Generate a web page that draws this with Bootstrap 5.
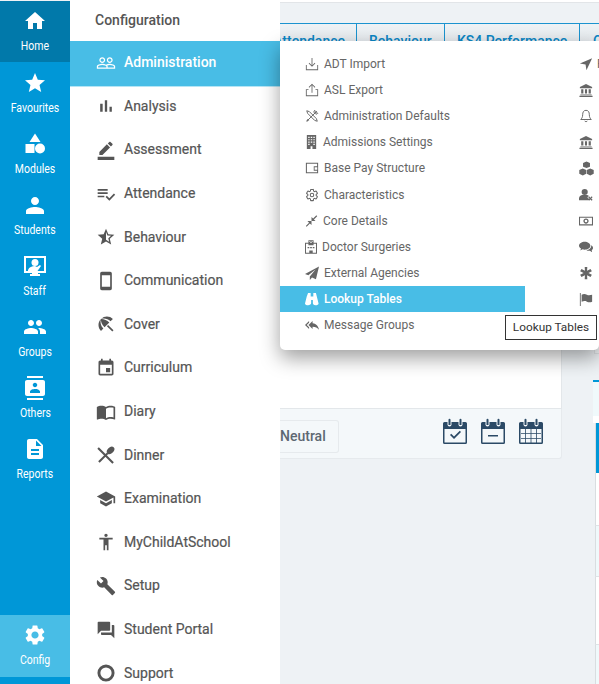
<!DOCTYPE html>
<html lang="en">
<head>
  <meta charset="UTF-8">
  <title>Configuration menu</title>
  <meta name="viewport" content="width=device-width, initial-scale=1">
  <link href="https://cdn.jsdelivr.net/npm/bootstrap@5.3.0/dist/css/bootstrap.min.css" rel="stylesheet">
  <style>
    html, body { height: 684px; overflow: hidden; }
    body { background: #eef2f5; font-family: Roboto, "Liberation Sans", sans-serif; }
    svg { fill: currentColor; flex: none; display: block; }

    /* left rail */
    .rail { width: 70px; flex: none; height: 684px; background: #0097d7; padding-bottom: 7px; }
    .rail-item { height: 61px; flex: none; padding-top: 9px; color: #fff; text-decoration: none; }
    .rail-item span { font-size: 12.5px; line-height: 16px; margin-top: 5px; white-space: nowrap; transform: scaleX(.84); }
    .rail-home { height: 62px; background: #0179aa; border-top: 1px solid #eef2f5; padding-top: 8px; }
    .rail-config { height: 62px; background: #48bde6; padding-top: 8px; }

    /* second level */
    .side-panel { width: 210px; flex: none; height: 684px; background: #fff; overflow: hidden; }
    .side-title { height: 41px; flex: none; padding-left: 25px; font-size: 14px; font-weight: 500; color: #555; }
    .side-item { height: 43.6px; flex: none; padding-left: 26px; gap: 8px; font-size: 14px; color: #555; -webkit-text-stroke: .2px #555; }
    .side-item.on { color: #fff; font-weight: 500; -webkit-text-stroke: 0; background: #48bde6; box-shadow: 0 1.4px 0 #48bde6; }

    /* page behind the menus */
    .behind { flex: 1; min-width: 0; height: 684px; overflow: hidden; }
    .top-strip { height: 23px; flex: none; background: linear-gradient(#fff 2px, #e2e5e8 2px, #e2e5e8 3px, #eef2f5 3px); }
    .tab-row { height: 33px; flex: none; border-top: 1px solid #1b93cf; background: linear-gradient(#eef2f5, #dfe4e8); }
    .tab-cell { height: 32px; flex: none; padding-top: 7px; border-right: 1px solid #1b93cf; color: #0a86c5; font-size: 14px; font-weight: 500; white-space: nowrap; }
    .tab-a { width: 77px; padding-right: 11px; }
    .tab-b { width: 88px; padding-left: 12px; }
    .tab-c { width: 135px; padding-left: 12px; }
    .tab-d { padding-left: 13px; border-right: 0; }
    .work-card { width: 282px; height: 403px; flex: none; }
    .card-top { height: 353px; flex: none; background: #fff; border-right: 1px solid #e3e7ea; border-bottom: 1px solid #e3e7ea; }
    .card-foot { height: 50px; flex: none; background: #f4f8fa; border-right: 1px solid #e6eaed; border-bottom: 1px solid #e6eaed; border-bottom-right-radius: 3px; padding-right: 18px; }
    .btn-neutral { width: 60px; height: 33px; margin-top: 5px; margin-left: -1px; margin-right: auto; border: 1px solid #e6eaed; border-left: 0; border-radius: 0 3px 3px 0; font-size: 14px; font-weight: 500; color: #5d6872; padding-left: 1px; }
    .cal-icons { gap: 14px; margin-bottom: 4px; color: #2b4a66; }
    .right-strip { width: 6px; margin-left: 31px; flex: none; }
    .strip-stub { height: 298px; flex: none; margin-left: 1px; background: #f2f5f7; border-left: 1px solid #dfe3e6; border-bottom: 1px solid #dfe3e6; }
    .strip-gap { height: 26px; flex: none; }
    .strip-head { height: 36px; flex: none; background: #f0f9fb; border-top: 2px solid #0097d7; }
    .strip-line { height: 7px; flex: none; background: #fff; }
    .strip-row { flex: none; margin-left: 2px; border-left: 1px solid #d9dde0; border-bottom: 1px solid #dfe3e6; }
    .strip-r1 { height: 50px; background: #0097d7; border-bottom: 0; }
    .strip-r2 { height: 53px; background: #fff; }
    .strip-r3 { height: 51px; background: #f0f9fb; }
    .strip-r4 { height: 68px; background: #fff; }
    .strip-r5 { height: 40px; background: #f0f9fb; border-bottom: 0; }

    /* flyout */
    .flyout { left: 280px; top: 41px; width: 319px; height: 309px; padding-top: 10px; background: #fff; border-radius: 0 0 5px 5px; box-shadow: 0 8px 20px rgba(0,0,0,.38); z-index: 5; overflow: hidden; }
    .fly-col-a { width: 245px; flex: none; }
    .fly-col-b { flex: 1; min-width: 0; }
    .fly-item { height: 26.1px; padding-left: 25px; gap: 5px; font-size: 12px; color: #666; white-space: nowrap; }
    .fly-item.on { color: #fff; font-weight: 500; background: #48bde6; }
    .fly-col-b .fly-item { padding-left: 54px; gap: 4px; }
    .tip-box { left: 225px; top: 274px; width: 92px; height: 25px; background: #fff; border: 1px solid #333; font-size: 11.8px; color: #333; }
  </style>
</head>
<body class="d-flex position-relative">

  <!-- main rail -->
  <nav class="rail d-flex flex-column">
    <a class="rail-item rail-home d-flex flex-column align-items-center"><svg width="24" height="24" viewBox="0 0 24 24"><path d="M10 20v-6h4v6h5v-8h3L12 3 2 12h3v8z"/></svg><span>Home</span></a>
    <a class="rail-item d-flex flex-column align-items-center"><svg width="24" height="24" viewBox="0 0 24 24"><path d="M12 17.27L18.18 21l-1.64-7.03L22 9.24l-7.19-.61L12 2 9.19 8.63 2 9.24l5.46 4.73L5.82 21z"/></svg><span>Favourites</span></a>
    <a class="rail-item d-flex flex-column align-items-center"><svg width="24" height="24" viewBox="0 0 24 24"><path d="M12 1.500l5.500 8.500H6.500z"/><rect x="2.500" y="12" width="9" height="9"/><circle cx="17" cy="16.500" r="5"/></svg><span>Modules</span></a>
    <a class="rail-item d-flex flex-column align-items-center"><svg width="24" height="24" viewBox="0 0 24 24"><path d="M12 12c2.210 0 4-1.790 4-4s-1.790-4-4-4-4 1.790-4 4 1.790 4 4 4zm0 2c-2.670 0-9 1.340-9 4v3h18v-3c0-2.660-6.330-4-9-4z"/></svg><span>Students</span></a>
    <a class="rail-item d-flex flex-column align-items-center"><svg width="24" height="24" viewBox="0 0 24 24"><path fill-rule="evenodd" d="M1 2h22v17H15v1h2v2H7v-2h2v-1H1zm2 2v13h18V4z"/><circle cx="12" cy="8.500" r="3.500"/><path d="M5 16c1-3 4-4 7-4l2 1 3-2 1 1-3.500 5H5z"/></svg><span>Staff</span></a>
    <a class="rail-item d-flex flex-column align-items-center"><svg width="24" height="24" viewBox="0 0 24 24"><path d="M16 11c1.660 0 2.990-1.340 2.990-3S17.660 5 16 5c-1.660 0-3 1.340-3 3s1.340 3 3 3zm-8 0c1.660 0 2.990-1.340 2.990-3S9.660 5 8 5C6.340 5 5 6.340 5 8s1.340 3 3 3zm0 2c-2.330 0-7 1.170-7 3.500V19h14v-2.500c0-2.330-4.670-3.500-7-3.500zm8 0c-.29 0-.62.02-.97.05 1.160.84 1.970 1.970 1.970 3.450V19h6v-2.500c0-2.330-4.670-3.500-7-3.500z"/></svg><span>Groups</span></a>
    <a class="rail-item d-flex flex-column align-items-center"><svg width="24" height="24" viewBox="2 0 20 24"><path d="M20 0H4v2h16V0zM4 24h16v-2H4v2zM20 4H4c-1.100 0-2 .9-2 2v12c0 1.100.9 2 2 2h16c1.100 0 2-.9 2-2V6c0-1.100-.9-2-2-2zm-8 2.750c1.240 0 2.250 1.010 2.250 2.250s-1.010 2.250-2.250 2.250S9.750 10.240 9.750 9 10.760 6.750 12 6.750zM17 17H7v-1.500c0-1.670 3.330-2.500 5-2.500s5 .83 5 2.500V17z"/></svg><span>Others</span></a>
    <a class="rail-item d-flex flex-column align-items-center"><svg width="24" height="24" viewBox="0 0 24 24"><path d="M14 2H6c-1.100 0-1.990.9-1.990 2L4 20c0 1.100.89 2 1.990 2H18c1.100 0 2-.9 2-2V8l-6-6zm2 16H8v-2h8v2zm0-4H8v-2h8v2zm-3-5V3.500L18.500 9H13z"/></svg><span>Reports</span></a>
    <a class="rail-item rail-config mt-auto d-flex flex-column align-items-center"><svg width="24" height="24" viewBox="0 0 24 24"><path d="M19.140 12.940c.04-.3.06-.61.06-.94 0-.32-.02-.64-.07-.94l2.030-1.580a.49.49 0 0 0 .12-.61l-1.920-3.320a.488.488 0 0 0-.59-.22l-2.390.96c-.5-.38-1.030-.7-1.620-.94l-.36-2.540a.484.484 0 0 0-.48-.41h-3.840c-.24 0-.43.17-.47.41l-.36 2.540c-.59.24-1.130.57-1.620.94l-2.390-.96c-.22-.08-.47 0-.59.22L2.740 8.870c-.12.21-.08.47.12.61l2.030 1.580c-.05.3-.09.63-.09.94s.02.64.07.94l-2.030 1.580a.49.49 0 0 0-.12.61l1.920 3.320c.12.22.37.29.59.22l2.390-.96c.5.38 1.030.7 1.620.94l.36 2.540c.05.24.24.41.48.41h3.840c.24 0 .44-.17.47-.41l.36-2.540c.59-.24 1.130-.56 1.620-.94l2.390.96c.22.08.47 0 .59-.22l1.920-3.320c.12-.22.07-.47-.12-.61l-2.010-1.580zM12 15.600c-1.980 0-3.600-1.620-3.600-3.600s1.620-3.600 3.600-3.600 3.600 1.620 3.600 3.600-1.620 3.600-3.600 3.600z"/></svg><span>Config</span></a>
  </nav>

  <!-- configuration list -->
  <aside class="side-panel d-flex flex-column">
    <div class="side-title d-flex align-items-center">Configuration</div>
    <div class="side-item on d-flex align-items-center"><svg width="20" height="20" viewBox="0 0 24 24"><path d="M16.500 13c-1.200 0-3.070.34-4.500 1-1.430-.67-3.300-1-4.500-1C5.330 13 1 14.080 1 16.250V19h22v-2.750c0-2.170-4.330-3.250-6.500-3.250zm-4 4.500h-10v-1.250c0-.54 2.560-1.750 5-1.750s5 1.210 5 1.750v1.250zm9 0H14v-1.250c0-.46-.2-.86-.52-1.220.88-.3 1.960-.53 3.020-.53 2.440 0 5 1.210 5 1.750v1.250zM7.500 12c1.930 0 3.500-1.570 3.500-3.500S9.430 5 7.500 5 4 6.570 4 8.500 5.570 12 7.500 12zm0-5.500c1.100 0 2 .9 2 2s-.9 2-2 2-2-.9-2-2 .9-2 2-2zm9 5.500c1.930 0 3.500-1.570 3.500-3.500S18.430 5 16.500 5 13 6.570 13 8.500s1.570 3.500 3.500 3.500zm0-5.500c1.100 0 2 .9 2 2s-.9 2-2 2-2-.9-2-2 .9-2 2-2z"/></svg>Administration</div>
    <div class="side-item d-flex align-items-center"><svg width="20" height="20" viewBox="0 0 24 24"><path d="M5 9.200h3V19H5zM10.600 5h2.800v14h-2.800zm5.600 8H19v6h-2.800z"/></svg>Analysis</div>
    <div class="side-item d-flex align-items-center"><svg width="20" height="20" viewBox="0 0 24 24"><path d="M22 24H2v-4h20v4zM13.060 5.190l3.750 3.750L7.750 18H4v-3.750l9.060-9.060zm4.820 2.680-3.750-3.750 1.830-1.830c.39-.39 1.020-.39 1.410 0l2.340 2.340c.39.39.39 1.020 0 1.410l-1.830 1.830z"/></svg>Assessment</div>
    <div class="side-item d-flex align-items-center"><svg width="20" height="20" viewBox="0 0 24 24"><path d="M14 10H2v2h12v-2zm0-4H2v2h12V6zM2 16h8v-2H2v2zm19.500-4.500L23 13l-6.990 7-4.510-4.500L13 14l3.010 3 5.490-5.500z"/></svg>Attendance</div>
    <div class="side-item d-flex align-items-center"><svg width="20" height="20" viewBox="0 0 24 24"><path d="M22 9.240l-7.190-.62L12 2 9.190 8.630 2 9.240l5.460 4.730L5.820 21 12 17.270 18.180 21l-1.630-7.030L22 9.240zM12 15.400V6.100l1.710 4.040 4.380.38-3.320 2.880 1 4.280L12 15.400z"/></svg>Behaviour</div>
    <div class="side-item d-flex align-items-center"><svg width="20" height="20" viewBox="0 0 24 24"><path d="M17 1.010L7 1c-1.100 0-2 .9-2 2v18c0 1.100.9 2 2 2h10c1.100 0 2-.9 2-2V3c0-1.100-.9-1.990-2-1.990zM17 19H7V5h10v14z"/></svg>Communication</div>
    <div class="side-item d-flex align-items-center"><svg width="20" height="20" viewBox="0 0 24 24"><path d="M13.127 14.560l1.430-1.430 6.440 6.443L19.570 21zm4.293-5.730l2.860-2.860c-3.950-3.950-10.350-3.960-14.300-.02 3.930-1.300 8.310-.25 11.440 2.880zM5.950 5.980c-3.940 3.950-3.930 10.350.02 14.300l2.860-2.860C5.700 14.290 4.650 9.910 5.950 5.980zm.02-.02l-.01.01c-.38 3.010 1.170 6.880 4.300 10.020l5.730-5.730c-3.130-3.130-7.010-4.680-10.020-4.300z"/></svg>Cover</div>
    <div class="side-item d-flex align-items-center"><svg width="20" height="20" viewBox="0 0 24 24"><path d="M17 12h-5v5h5v-5zM16 1v2H8V1H6v2H5c-1.110 0-1.990.9-1.990 2L3 19c0 1.100.89 2 2 2h14c1.100 0 2-.9 2-2V5c0-1.100-.9-2-2-2h-1V1h-2zm3 18H5V8h14v11z"/></svg>Curriculum</div>
    <div class="side-item d-flex align-items-center"><svg width="20" height="20" viewBox="0 0 24 24"><path d="M21 5c-1.110-.35-2.330-.5-3.500-.5-1.950 0-4.050.4-5.500 1.500-1.450-1.100-3.550-1.500-5.500-1.500S2.450 4.900 1 6v14.650c0 .25.25.5.5.5.1 0 .15-.05.25-.05C3.100 20.450 5.050 20 6.500 20c1.950 0 4.050.4 5.500 1.500 1.350-.85 3.800-1.500 5.500-1.500 1.650 0 3.350.3 4.750 1.050.1.05.15.05.25.05.25 0 .5-.25.5-.5V6c-.6-.45-1.250-.75-2-1zm0 13.500c-1.100-.35-2.300-.5-3.500-.5-1.700 0-4.150.65-5.500 1.500V8c1.350-.85 3.800-1.500 5.500-1.500 1.200 0 2.400.15 3.500.5v11.500z"/></svg>Diary</div>
    <div class="side-item d-flex align-items-center"><svg width="20" height="20" viewBox="0 0 24 24"><path d="M3.400 2.600l18 18-1.800 1.800-18-18zM15 10.500L4.400 21.200l-1.800-1.800L13.200 9z"/><ellipse cx="17.500" cy="6.500" rx="3.600" ry="5.200" transform="rotate(45 17.500 6.500)"/></svg>Dinner</div>
    <div class="side-item d-flex align-items-center"><svg width="20" height="20" viewBox="0 0 24 24"><path d="M5 13.180v4L12 21l7-3.820v-4L12 17l-7-3.820zM12 3L1 9l11 6 9-4.910V17h2V9L12 3z"/></svg>Examination</div>
    <div class="side-item d-flex align-items-center"><svg width="20" height="20" viewBox="0 0 24 24"><path d="M12 2c1.100 0 2 .9 2 2s-.9 2-2 2-2-.9-2-2 .9-2 2-2zm8 7h-5v13h-2v-6h-2v6H9V9H4V7h16v2z"/></svg>MyChildAtSchool</div>
    <div class="side-item d-flex align-items-center"><svg width="20" height="20" viewBox="0 0 24 24"><path d="M22.700 19l-9.100-9.100c.9-2.300.4-5-1.500-6.900-2-2-5-2.400-7.400-1.300L9 6 6 9 1.600 4.700C.4 7.100.9 10.100 2.900 12.100c1.900 1.900 4.600 2.400 6.900 1.500l9.100 9.100c.4.4 1 .4 1.400 0l2.300-2.300c.5-.4.5-1.100.1-1.400z"/></svg>Setup</div>
    <div class="side-item d-flex align-items-center"><svg width="20" height="20" viewBox="0 0 24 24"><path d="M21 6h-2v9H6v2c0 .55.45 1 1 1h11l4 4V7c0-.55-.45-1-1-1zm-4 6V3c0-.55-.45-1-1-1H3c-.55 0-1 .45-1 1v14l4-4h10c.55 0 1-.45 1-1z"/></svg>Student Portal</div>
    <div class="side-item d-flex align-items-center"><svg width="20" height="20" viewBox="0 0 24 24"><circle cx="12" cy="12" r="8.500" fill="none" stroke="currentColor" stroke-width="3.500"/></svg>Support</div>
  </aside>

  <!-- page content behind the menu -->
  <main class="behind d-flex flex-column">
    <div class="top-strip"></div>
    <div class="tab-row d-flex">
      <div class="tab-cell tab-a d-flex justify-content-end">Attendance</div>
      <div class="tab-cell tab-b">Behaviour</div>
      <div class="tab-cell tab-c">KS4 Performance</div>
      <div class="tab-cell tab-d">Curriculum</div>
    </div>
    <div class="d-flex flex-grow-1">
      <div class="work-card d-flex flex-column">
        <div class="card-top"></div>
        <div class="card-foot d-flex align-items-center">
          <div class="btn-neutral d-flex align-items-center">Neutral</div>
          <div class="cal-icons d-flex">
            <svg width="24" height="27" viewBox="0 0 24 27"><path fill-rule="evenodd" d="M1.500 4H22.500A1.500 1.500 0 0 1 24 5.500v19a1.500 1.500 0 0 1-1.500 1.500H1.500A1.500 1.500 0 0 1 0 24.500v-19A1.500 1.500 0 0 1 1.500 4zM1.500 11v13.500h21V11z"/><rect x="4.500" y="1" width="4" height="7.500" rx="2" fill="#f4f8fa"/><rect x="15.500" y="1" width="4" height="7.500" rx="2" fill="#f4f8fa"/><path d="M5.500 1.800a1 1 0 0 1 2 0V7h-2zM16.500 1.800a1 1 0 0 1 2 0V7h-2z"/><path d="M7 17l1.200-1.200 2.800 2.800 5.800-5.800L18 14l-7 7z"/></svg>
            <svg width="24" height="27" viewBox="0 0 24 27"><path fill-rule="evenodd" d="M1.500 4H22.500A1.500 1.500 0 0 1 24 5.500v19a1.500 1.500 0 0 1-1.500 1.500H1.500A1.500 1.500 0 0 1 0 24.500v-19A1.500 1.500 0 0 1 1.500 4zM1.500 11v13.500h21V11z"/><rect x="4.500" y="1" width="4" height="7.500" rx="2" fill="#f4f8fa"/><rect x="15.500" y="1" width="4" height="7.500" rx="2" fill="#f4f8fa"/><path d="M5.500 1.800a1 1 0 0 1 2 0V7h-2zM16.500 1.800a1 1 0 0 1 2 0V7h-2zM7 17h10v1.500H7z"/></svg>
            <svg width="24" height="27" viewBox="0 0 24 27"><path fill-rule="evenodd" d="M1.500 4H22.500A1.500 1.500 0 0 1 24 5.500v19a1.500 1.500 0 0 1-1.500 1.500H1.500A1.500 1.500 0 0 1 0 24.500v-19A1.500 1.500 0 0 1 1.500 4zM1.500 11v13.500h21V11z"/><rect x="4.500" y="1" width="4" height="7.500" rx="2" fill="#f4f8fa"/><rect x="15.500" y="1" width="4" height="7.500" rx="2" fill="#f4f8fa"/><path d="M5.500 1.800a1 1 0 0 1 2 0V7h-2zM16.500 1.800a1 1 0 0 1 2 0V7h-2zM2 15h20v.8H2zM2 20h20v.8H2zM6 11h.8v14H6zM11.600 11h.8v14h-.8zM17.200 11h.8v14h-.8z"/></svg>
          </div>
        </div>
      </div>
      <div class="right-strip d-flex flex-column">
        <div class="strip-stub"></div>
        <div class="strip-gap"></div>
        <div class="strip-head"></div>
        <div class="strip-line"></div>
        <div class="strip-row strip-r1"></div>
        <div class="strip-row strip-r2"></div>
        <div class="strip-row strip-r3"></div>
        <div class="strip-row strip-r4"></div>
        <div class="strip-row strip-r5"></div>
      </div>
    </div>
  </main>

  <!-- administration flyout -->
  <div class="flyout position-absolute d-flex">
    <div class="fly-col-a">
      <div class="fly-item d-flex align-items-center"><svg width="14" height="14" viewBox="0 0 16 16"><path d="M7.500 1h1v8.300l2.600-2.600.7.700L8 11.200 4.200 7.400l.7-.7 2.600 2.600zM1 9h1v5h12V9h1v6H1z"/></svg>ADT Import</div>
      <div class="fly-item d-flex align-items-center"><svg width="14" height="14" viewBox="0 0 16 16"><path d="M7.500 11h1V2.700l2.600 2.600.7-.7L8 .8 4.200 4.600l.7.700 2.600-2.600zM1 7h3v1H2v6h12V8h-2V7h3v8H1z"/></svg>ASL Export</div>
      <div class="fly-item d-flex align-items-center"><svg width="14" height="14" viewBox="0 0 16 16"><path fill="none" stroke="currentColor" stroke-width="1.100" d="M2 2l3 1 8 8 1 3-3-1-8-8zM13.500 2.500l-11 11M11 1.500l3.500 3.500-2 1-2.500-2.500zM2 14l2-1-1-1z"/></svg>Administration Defaults</div>
      <div class="fly-item d-flex align-items-center"><svg width="13" height="14" viewBox="0 0 13 15"><path fill-rule="evenodd" d="M1.500 0h10v15h-4v-3h-2v3h-4zM3 2v1.200h1.500V2zm2.700 0v1.200h1.600V2zm2.800 0v1.200H10V2zM3 4.500v1.200h1.500V4.500zm2.700 0v1.200h1.600V4.500zm2.800 0v1.200H10V4.500zM3 7v1.200h1.500V7zm2.700 0v1.200h1.600V7zm2.800 0v1.200H10V7zM3 9.500v1.200h1.500V9.500zm5.500 0v1.200H10V9.500z"/></svg>Admissions Settings</div>
      <div class="fly-item d-flex align-items-center"><svg width="14" height="14" viewBox="0 0 16 16"><path fill-rule="evenodd" d="M1 2h14v12H1zm1.200 1.200v9.600h11.600V11H10V6h3.800V3.200zM11 7v3h3V7z"/></svg>Base Pay Structure</div>
      <div class="fly-item d-flex align-items-center"><svg width="14" height="14" viewBox="0 0 24 24"><path fill="none" stroke="currentColor" stroke-width="1.800" d="M19.140 12.940c.04-.3.06-.61.06-.94 0-.32-.02-.64-.07-.94l2.030-1.580a.49.49 0 0 0 .12-.61l-1.920-3.320a.488.488 0 0 0-.59-.22l-2.390.96c-.5-.38-1.030-.7-1.620-.94l-.36-2.540a.484.484 0 0 0-.48-.41h-3.840c-.24 0-.43.17-.47.41l-.36 2.540c-.59.24-1.130.57-1.620.94l-2.390-.96c-.22-.08-.47 0-.59.22L2.740 8.870c-.12.21-.08.47.12.61l2.030 1.580c-.05.3-.09.63-.09.94s.02.64.07.94l-2.030 1.580a.49.49 0 0 0-.12.61l1.920 3.320c.12.22.37.29.59.22l2.390-.96c.5.38 1.030.7 1.620.94l.36 2.540c.05.24.24.41.48.41h3.840c.24 0 .44-.17.47-.41l.36-2.540c.59-.24 1.130-.56 1.620-.94l2.390.96c.22.08.47 0 .59-.22l1.920-3.320c.12-.22.07-.47-.12-.61l-2.010-1.580z"/><circle cx="12" cy="12" r="3" fill="none" stroke="currentColor" stroke-width="1.800"/></svg>Characteristics</div>
      <div class="fly-item d-flex align-items-center"><svg width="13" height="14" viewBox="0 0 16 16"><path d="M2 15l-1-1 4-4-2-2h5v5l-2-2zM15 2l-4 4 2 2H8V3l2 2 4-4z"/></svg>Core Details</div>
      <div class="fly-item d-flex align-items-center"><svg width="12" height="14" viewBox="0 0 14 16"><path fill-rule="evenodd" d="M4 0h6v3h4v13H0V3h4zm1 1v1h1v1h2V2h1V1H8v.8H6V1zM1.200 4.200v10.600H5V12h4v2.800h3.800V4.200H10V6H4V4.200zM3 8h2v1.500H3zm3 0h2v1.500H6zm3 0h2v1.500H9z"/></svg>Doctor Surgeries</div>
      <div class="fly-item d-flex align-items-center"><svg width="14" height="14" viewBox="0 0 16 16"><path d="M16 .5L12.500 15l-4.500-2-2.500 3v-4L12 4 3.800 10.500 0 9z"/></svg>External Agencies</div>
      <div class="fly-item on d-flex align-items-center"><svg width="14" height="14" viewBox="0 0 16 16"><path d="M3.500 1h3v4h3V1h3l1 4 2 8c0 1.500-1.500 2-3.500 2S9 14 9 12.500V9H7v3.500C7 14 5.500 15 3.500 15S0 14.500 0 13l2-8z"/></svg>Lookup Tables</div>
      <div class="fly-item d-flex align-items-center"><svg width="14" height="14" viewBox="0 0 24 24"><path d="M7 8V5l-7 7 7 7v-3l-4-4 4-4zm6 1V5l-7 7 7 7v-4.100c5 0 8.500 1.600 11 5.100-1-5-4-10-11-11z"/></svg>Message Groups</div>
    </div>
    <div class="fly-col-b">
      <div class="fly-item d-flex align-items-center"><svg width="14" height="14" viewBox="0 0 16 16"><path d="M15 1.500L8.500 15l-1-6.500L1 7.500z"/></svg>F</div>
      <div class="fly-item d-flex align-items-center"><svg width="14" height="14" viewBox="0 0 16 16"><path d="M8 1l7 3.500V6H1V4.500zM2.500 7H5v5H2.500zM6.800 7h2.400v5H6.800zM11 7h2.500v5H11zM1.500 13h13v1h-13zM.5 14.500h15V16H.5z"/></svg></div>
      <div class="fly-item d-flex align-items-center"><svg width="14" height="14" viewBox="0 0 16 16"><path fill="none" stroke="currentColor" stroke-width="1.100" d="M8 1.500c3 0 3.800 2.500 3.800 5 0 3 1.200 4.500 2.200 5.500H2c1-1 2.200-2.500 2.200-5.500 0-2.500.8-5 3.800-5zM6.500 13.500c.3 1.300 2.700 1.300 3 0"/></svg></div>
      <div class="fly-item d-flex align-items-center"><svg width="14" height="14" viewBox="0 0 16 16"><path d="M8 1l7 3.500V6H1V4.500zM2.500 7H5v5H2.500zM6.800 7h2.400v5H6.800zM11 7h2.500v5H11zM1.500 13h13v1h-13zM.5 14.500h15V16H.5z"/></svg></div>
      <div class="fly-item d-flex align-items-center"><svg width="15" height="15" viewBox="0 0 16 16"><path d="M8 .5l3.700 1.500v4L8 7.500 4.300 6V2zM4 8l3.700 1.500v4L4 15.500.3 13.500v-4zM12 8l3.700 1.500v4l-3.700 2-3.700-2v-4z"/></svg></div>
      <div class="fly-item d-flex align-items-center"><svg width="14" height="14" viewBox="0 0 16 16"><circle cx="6.500" cy="4.500" r="3.500"/><path d="M0 14v-2c0-2.500 2-4 4-4h5c1 0 1.800.4 2.200 1l-1.700 1.700 2 2-1 1.300zM11.500 9.500l1.500 1.500 1.500-1.500 1 1L14 12l1.500 1.500-1 1L13 13l-1.500 1.500-1-1L12 12l-1.500-1.500z"/></svg></div>
      <div class="fly-item d-flex align-items-center"><svg width="14" height="14" viewBox="0 0 16 16"><path fill-rule="evenodd" d="M0 3h16v10H0zm1.200 1.200v7.600h13.600V4.200zM8 5c1.700 0 3 1.300 3 3s-1.300 3-3 3-3-1.300-3-3 1.300-3 3-3zm0 1.500a1.500 1.500 0 1 0 0 3 1.500 1.500 0 0 0 0-3z"/></svg></div>
      <div class="fly-item d-flex align-items-center"><svg width="14" height="14" viewBox="0 0 16 16"><path d="M6.500 2C10 2 13 4 13 6.500S10 11 6.500 11c-.9 0-1.800-.1-2.500-.4L1.500 12l.8-2.400C.9 8.800 0 7.700 0 6.500 0 4 3 2 6.500 2zM14 6c1.300.7 2 1.800 2 3 0 1-.6 2-1.500 2.600l.5 2.400-2.600-1.700c-1.300.2-2.900 0-3.900-.7 3-.2 5.700-2.400 5.500-5.600z"/></svg></div>
      <div class="fly-item d-flex align-items-center"><svg width="14" height="14" viewBox="0 0 16 16"><path d="M6.500 1h3l-.3 4.500 4-2 1.500 2.600L10.800 8l3.900 1.900-1.500 2.600-4-2L9.500 15h-3l.3-4.500-4 2-1.500-2.600L5.200 8 1.300 6.100l1.500-2.600 4 2z"/></svg></div>
      <div class="fly-item d-flex align-items-center"><svg width="14" height="14" viewBox="0 0 16 16"><path d="M1 1h1v15H1zM3 3c2-1 4-1 6 0s4 .5 6 0v8c-2 1-4 1-6 0s-4-.5-6 0z"/></svg></div>
    </div>
    <div class="tip-box position-absolute d-flex align-items-center justify-content-center">Lookup Tables</div>
  </div>

  <script src="https://cdn.jsdelivr.net/npm/bootstrap@5.3.0/dist/js/bootstrap.bundle.min.js"></script>
</body>
</html>
